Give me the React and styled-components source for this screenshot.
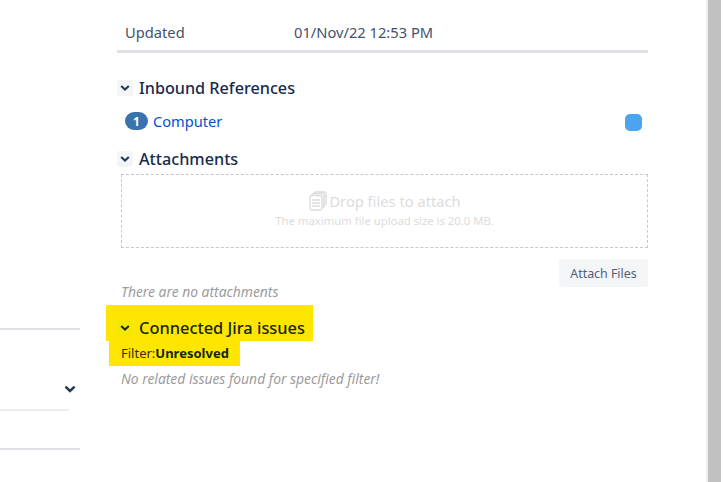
import styled, { createGlobalStyle } from "styled-components"

const GlobalStyle = createGlobalStyle`
html, body {
  margin: 0;
  padding: 0;
  background: #fff;
  overflow: hidden;
}
* { box-sizing: border-box; }
`;

function Chevron({ size = 10, color = "#253858" }) {
  return (
    <svg width={size} height={size} viewBox="0 0 10 10">
      <path d="M1.2 3l3.8 3.6L8.8 3" fill="none" stroke={color} strokeWidth="2.1" />
    </svg>
  )
}

function FilesIcon() {
  return (
    <svg width="18" height="20" viewBox="0 0 18 20" fill="none" stroke="#dcdcdc" strokeWidth="1.4">
      <rect x="5" y="1" width="12" height="13" rx="2" />
      <rect x="3" y="2.5" width="12" height="14" rx="2" fill="#fff" />
      <rect x="1" y="4.5" width="12" height="14.5" rx="2" fill="#fff" />
      <path d="M3 9h8M3 12h8M3 15h8" />
    </svg>
  )
}

function App() {
  return (
    <Page>
      <GlobalStyle />
      <LeftColumn>
        <Rule />
        <ChevronRow><Chevron size={12} /></ChevronRow>
        <Rule $short $light />
        <Rule $gap="37px" />
      </LeftColumn>
      <Main>
        <DetailRow>
          <DetailLabel>Updated</DetailLabel>
          <span>01/Nov/22 12:53 PM</span>
        </DetailRow>

        <SectionHead $top="23px">
          <Toggle><Chevron /></Toggle>
          <Title>Inbound References</Title>
        </SectionHead>
        <RefRow>
          <Badge>1</Badge>
          <RefLink>Computer</RefLink>
          <BlueDot />
        </RefRow>

        <SectionHead $top="14px">
          <Toggle><Chevron /></Toggle>
          <Title>Attachments</Title>
        </SectionHead>
        <DropZone>
          <DropTitle><FilesIcon />Drop files to attach</DropTitle>
          <DropHint>The maximum file upload size is 20.0 MB.</DropHint>
        </DropZone>
        <ButtonRow>
          <AttachButton>Attach Files</AttachButton>
        </ButtonRow>
        <Muted $top="-4px">There are no attachments</Muted>

        <JiraHead>
          <Toggle $flat><Chevron color="#1c2a10" /></Toggle>
          <Title $dark>Connected Jira issues</Title>
        </JiraHead>
        <FilterRow>Filter:<b>Unresolved</b></FilterRow>
        <Muted $top="4px">No related issues found for specified filter!</Muted>
      </Main>
      <Gutter />
      <Scrollbar />
    </Page>
  )
}

export default App

const Page = styled.div`
display: flex;
width: 723px;
height: 482px;
overflow: hidden;
font-family: "Noto Sans", "Open Sans", sans-serif;
color: #172b4d;
`;

const LeftColumn = styled.div`
width: 80px;
flex-shrink: 0;
padding-top: 328px;
`;

const Rule = styled.div`
height: 2px;
width: ${(p) => (p.$short ? "69px" : "80px")};
margin-top: ${(p) => p.$gap || "0"};
background: ${(p) => (p.$light ? "#ebecf0" : "#dfe1e6")};
`;

const ChevronRow = styled.div`
height: 79px;
width: 76px;
display: flex;
justify-content: flex-end;
align-items: flex-end;
padding-bottom: 14px;
`;

const Main = styled.div`
width: 531px;
margin-left: 37px;
flex-shrink: 0;
`;

const DetailRow = styled.div`
display: flex;
height: 53px;
padding: 22px 0 0 8px;
border-bottom: 3px solid #dfe1e6;
font-size: 14.7px;
line-height: 20px;
color: #42526e;
`;

const DetailLabel = styled.span`
width: 169px;
`;

const SectionHead = styled.div`
display: flex;
align-items: center;
gap: 6px;
height: 24px;
margin-top: ${(p) => p.$top};
`;

const Toggle = styled.span`
display: flex;
align-items: center;
justify-content: center;
width: 16px;
height: 16px;
border-radius: 3px;
background: ${(p) => (p.$flat ? "#f4e800" : "#f4f5f7")};
`;

const Title = styled.h2`
margin: 0;
font-size: ${(p) => (p.$dark ? "16.4px" : "16.2px")};
font-weight: 500;
line-height: 24px;
color: ${(p) => (p.$dark ? "#142600" : "#172b4d")};
`;

const RefRow = styled.div`
display: flex;
align-items: center;
height: 24px;
margin-top: 9px;
padding: 0 6px 0 8px;
`;

const Badge = styled.span`
display: flex;
align-items: center;
justify-content: center;
width: 23px;
height: 18px;
border-radius: 9px;
background: #3b73af;
color: #fff;
font-size: 12px;
font-weight: 700;
`;

const RefLink = styled.a`
margin-left: 5px;
font-size: 14.6px;
color: #0052cc;
`;

const BlueDot = styled.span`
margin: 3px 0 0 auto;
width: 17px;
height: 17px;
border-radius: 5px;
background: #4aa5ee;
`;

const DropZone = styled.div`
height: 74px;
margin: 3px 0 0 4px;
border: 1px dashed #c8c8c8;
display: flex;
flex-direction: column;
align-items: center;
padding-top: 15px;
`;

const DropTitle = styled.div`
display: flex;
align-items: center;
gap: 2px;
height: 22px;
padding-left: 1px;
font-size: 14.7px;
color: #dcdcdc;
`;

const DropHint = styled.div`
font-size: 11.3px;
line-height: 16px;
margin-top: 1px;
color: #dcdcdc;
`;

const ButtonRow = styled.div`
display: flex;
justify-content: flex-end;
margin-top: 11px;
`;

const AttachButton = styled.button`
width: 89px;
height: 28px;
border: none;
border-radius: 3px;
background: #f4f5f7;
color: #505f79;
font-family: inherit;
font-size: 12.4px;
`;

const Muted = styled.div`
margin: ${(p) => p.$top} 0 0 4px;
height: 18px;
font-size: 13.85px;
line-height: 18px;
font-style: italic;
color: #9b9b9b;
`;

const JiraHead = styled.div`
display: flex;
align-items: center;
gap: 6px;
width: 207px;
height: 36px;
margin: 4px 0 0 -11px;
padding: 9px 0 0 11px;
background: #ffe600;
`;

const FilterRow = styled.div`
width: 131px;
height: 25px;
margin-left: -8px;
padding-left: 12px;
background: #ffe600;
font-size: 13px;
line-height: 24px;
color: #402a00;
b {
  color: #142600;
  font-weight: 700;
}
`;

const Gutter = styled.div`
width: 60px;
flex-shrink: 0;
border-right: 2px solid #efefef;
`;

const Scrollbar = styled.div`
width: 13px;
flex-shrink: 0;
background: #c1c1c1;
`;
